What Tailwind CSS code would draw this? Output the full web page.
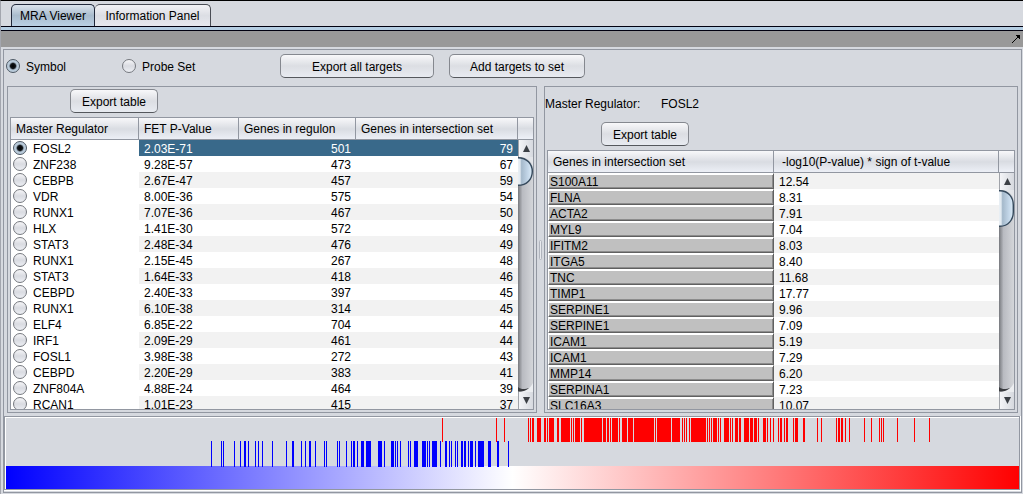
<!DOCTYPE html>
<html lang="en">
<head>
<meta charset="utf-8">
<title>MRA Viewer</title>
<script src="https://cdn.jsdelivr.net/npm/@tailwindcss/browser@4"></script>
</head>
<body class="flex h-screen flex-col overflow-hidden border-t border-l border-t-black border-l-[#a3a6ae] bg-[#d6d9df] font-['Liberation_Sans',Arial,sans-serif] text-[12px] leading-4 text-black">

<nav class="flex h-[26px] shrink-0 items-end border-b border-[#00000f] pl-[10px]" role="tablist">
  <button role="tab" aria-selected="true" class="h-[22px] w-[84px] rounded-t-[5px] border border-b-0 border-[#20283a] bg-linear-to-b from-[#dbe3ec] via-[#a9bccd] to-[#bacfe3]">MRA Viewer</button>
  <button role="tab" aria-selected="false" class="h-[22px] w-[116px] rounded-t-[5px] border border-b-0 border-l-0 border-[#4a4d55] bg-linear-to-b from-[#f3f3f6] via-[#dcdee4] to-[#e6e8ee]">Information Panel</button>
</nav>
<div class="h-1 shrink-0 border-b border-[#00000f] bg-[#b4cde2]"></div>
<div class="flex h-4 shrink-0 items-center justify-end bg-[#999999] pr-[3px]">
  <button aria-label="Detach panel" class="block">
    <svg class="block" width="8" height="8" viewBox="0 0 8 8" shape-rendering="crispEdges"><path d="M4 0h4v4h-1v-1h-1v-1h-1v-1h-1zM5 2h1v1h-1zM4 3h1v1h-1zM3 4h1v1h-1zM2 5h1v1h-1zM1 6h1v1h-1zM0 7h1v1h-1z"/></svg>
  </button>
</div>

<main class="mt-[2px] mr-px mb-px ml-[2px] flex min-h-0 flex-1 flex-col border border-[#9297a1]">
  <div class="flex h-9 shrink-0 items-start pt-1 pl-[2px]">
    <label class="flex h-6 w-[116px] items-center gap-[6px]"><input type="radio" name="mode" checked class="size-[14px] appearance-none rounded-full border border-[#4c5763] bg-[radial-gradient(circle,#000_0,#101418_2.5px,#b4c6d6_4px,#c4d4e2_7px)]"><span class="pt-[2px]">Symbol</span></label>
    <label class="flex h-6 w-[158px] items-center gap-[6px]"><input type="radio" name="mode" class="size-[14px] appearance-none rounded-full border border-[#75787e] bg-linear-to-b from-[#f6f6f8] via-[#d9dbe1] to-[#eceef3]"><span class="pt-[2px]">Probe Set</span></label>
    <button class="h-6 w-[154px] rounded-[5px] border border-[#85888f] border-b-[#55585d] bg-linear-to-b from-[#f8f8fa] via-[#dcdee3] to-[#e8ebf1] pt-[2px]">Export all targets</button>
    <button class="ml-[15px] h-6 w-[136px] rounded-[5px] border border-[#85888f] border-b-[#55585d] bg-linear-to-b from-[#f8f8fa] via-[#dcdee3] to-[#e8ebf1] pt-[2px]">Add targets to set</button>
  </div>

  <div class="grid min-h-0 flex-1 grid-cols-[minmax(0,530fr)_7px_minmax(0,474fr)] grid-rows-[minmax(0,1fr)] px-[3px]">
    <section class="flex min-h-0 flex-col border border-[#9297a1] p-[2px]">
      <button class="mb-1 ml-[60px] h-6 w-[88px] shrink-0 rounded-[5px] border border-[#85888f] border-b-[#55585d] bg-linear-to-b from-[#f8f8fa] via-[#dcdee3] to-[#e8ebf1] pt-[2px]">Export table</button>
      <div class="flex min-h-0 flex-1 border border-[#9297a1] bg-white">
        <div class="min-w-0 flex-1 overflow-hidden">
          <table class="w-full table-fixed border-separate border-spacing-0">
            <colgroup><col class="w-[128px]"><col class="w-[100px]"><col class="w-[117px]"><col></colgroup>
            <thead><tr class="h-[22px] bg-linear-to-b from-[#f8f8fa] via-[#d9dce2] to-[#eef1f8] text-left">
              <th class="border-r border-b border-[#9297a1] px-[5px] py-0 font-normal whitespace-nowrap">Master Regulator</th>
              <th class="border-r border-b border-[#9297a1] px-[5px] py-0 font-normal whitespace-nowrap">FET P-Value</th>
              <th class="border-r border-b border-[#9297a1] px-[5px] py-0 font-normal whitespace-nowrap">Genes in regulon</th>
              <th class="border-r border-b border-[#9297a1] px-[5px] py-0 font-normal whitespace-nowrap">Genes in intersection set</th>
            </tr></thead>
            <tbody id="regulators"></tbody>
          </table>
        </div>
        <div class="flex w-[15px] shrink-0 flex-col">
          <div class="h-[22px] shrink-0 border-b border-[#9297a1] bg-linear-to-b from-[#f8f8fa] via-[#d9dce2] to-[#eef1f8]"></div>
          <div class="flex min-h-0 flex-1 flex-col bg-linear-to-r from-[#77797e] via-[#b9bbc1] via-30% to-[#d4d6da]">
            <button aria-label="Scroll up" class="flex h-[17px] shrink-0 items-center justify-center border-l border-[#a0a3a9] bg-linear-to-r from-[#f4f5f8] to-[#d6d9df]"><svg width="7" height="7" viewBox="0 0 7 7"><path d="M3.5 0L7 7H0z" fill="#3b3f45"/></svg></button>
            <svg class="block shrink-0" width="15" height="29" viewBox="0 0 15 29"><defs><linearGradient id="thumb"><stop offset="0" stop-color="#eef3f7"/><stop offset=".2" stop-color="#e2eaf1"/><stop offset=".3" stop-color="#a5b9cb"/><stop offset=".7" stop-color="#c3d6e8"/><stop offset="1" stop-color="#dcecf8"/></linearGradient></defs><path d="M0 0H2Q13 1 15 10V0z" fill="#e3e5e9"/><path d="M-1 .7H0C9 .7 14.3 7 14.3 14.5S9 28.3 0 28.3H-1z" fill="url(#thumb)" stroke="#35495c" stroke-width="1.4"/></svg>
            <div class="flex-1"></div>
            <svg class="block shrink-0" width="15" height="9" viewBox="0 0 15 9"><path d="M0 8.5C8 8.5 12 6 15 0V9H0z" fill="#eceef1"/><path d="M0 4C3 7 8 6 11 5C8 8 4 8.5 0 8.5z" fill="#3a3c40"/></svg>
            <button aria-label="Scroll down" class="flex h-[17px] shrink-0 items-center justify-center border-l border-[#a0a3a9] bg-linear-to-r from-[#f4f5f8] to-[#d6d9df]"><svg width="7" height="7" viewBox="0 0 7 7"><path d="M0 0H7L3.5 7z" fill="#3b3f45"/></svg></button>
          </div>
        </div>
      </div>
    </section>

    <div class="flex items-center justify-center"><span class="h-5 w-[3px] rounded-full border border-[#b0b4bd] bg-[#e8eaee]"></span></div>

    <section class="flex min-h-0 flex-col border border-[#9297a1]">
      <div class="flex h-[35px] shrink-0 items-start pt-[9px]"><span class="w-[116px]">Master Regulator:</span><span>FOSL2</span></div>
      <button class="mb-1 ml-[56px] h-6 w-[88px] shrink-0 rounded-[5px] border border-[#85888f] border-b-[#55585d] bg-linear-to-b from-[#f8f8fa] via-[#dcdee3] to-[#e8ebf1] pt-[2px]">Export table</button>
      <div class="mx-[2px] mb-[2px] flex min-h-0 flex-1 border border-[#9297a1] bg-white">
        <div class="min-w-0 flex-1 overflow-hidden">
          <table class="w-full table-fixed border-separate border-spacing-0">
            <colgroup><col class="w-[226px]"><col></colgroup>
            <thead><tr class="h-[22px] bg-linear-to-b from-[#f8f8fa] via-[#d9dce2] to-[#eef1f8] text-left">
              <th class="border-r border-b border-[#9297a1] px-[5px] py-0 font-normal whitespace-nowrap">Genes in intersection set</th>
              <th class="border-r border-b border-[#9297a1] px-2 py-0 font-normal whitespace-nowrap">-log10(P-value) * sign of t-value</th>
            </tr></thead>
            <tbody id="genes"></tbody>
          </table>
        </div>
        <div class="flex w-[15px] shrink-0 flex-col">
          <div class="h-[22px] shrink-0 border-b border-[#9297a1] bg-linear-to-b from-[#f8f8fa] via-[#d9dce2] to-[#eef1f8]"></div>
          <div class="flex min-h-0 flex-1 flex-col bg-linear-to-r from-[#77797e] via-[#b9bbc1] via-30% to-[#d4d6da]">
            <button aria-label="Scroll up" class="flex h-[17px] shrink-0 items-center justify-center border-l border-[#a0a3a9] bg-linear-to-r from-[#f4f5f8] to-[#d6d9df]"><svg width="7" height="7" viewBox="0 0 7 7"><path d="M3.5 0L7 7H0z" fill="#3b3f45"/></svg></button>
            <svg class="block shrink-0" width="15" height="37" viewBox="0 0 15 37"><path d="M0 0H2Q13 1 15 10V0z" fill="#e3e5e9"/><path d="M-1 .7H1C9 .7 14.3 7 14.3 15V22C14.3 30 9 36.3 1 36.3H-1z" fill="url(#thumb)" stroke="#35495c" stroke-width="1.4"/></svg>
            <div class="flex-1"></div>
            <svg class="block shrink-0" width="15" height="9" viewBox="0 0 15 9"><path d="M0 8.5C8 8.5 12 6 15 0V9H0z" fill="#eceef1"/><path d="M0 4C3 7 8 6 11 5C8 8 4 8.5 0 8.5z" fill="#3a3c40"/></svg>
            <button aria-label="Scroll down" class="flex h-[17px] shrink-0 items-center justify-center border-l border-[#a0a3a9] bg-linear-to-r from-[#f4f5f8] to-[#d6d9df]"><svg width="7" height="7" viewBox="0 0 7 7"><path d="M0 0H7L3.5 7z" fill="#3b3f45"/></svg></button>
          </div>
        </div>
      </div>
    </section>
  </div>

  <div class="mt-[3px] mb-px shrink-0 border-r border-b border-white">
    <div class="border border-[#9297a1]">
      <div class="border-t border-l border-white">
        <svg class="block h-[71px] w-full" viewBox="0 0 1013 71" preserveAspectRatio="none" shape-rendering="crispEdges" role="img" aria-label="Target gene rank barcode">
          <defs><linearGradient id="scale"><stop offset="0" stop-color="#00f"/><stop offset=".5" stop-color="#fff"/><stop offset="1" stop-color="#f00"/></linearGradient></defs>
          <rect y="48" width="1013" height="23" fill="url(#scale)"/>
          <g id="up" fill="#ff0000"></g>
          <g id="down" fill="#0000ff"></g>
        </svg>
      </div>
    </div>
  </div>
</main>

<script>
const regulators = `FOSL2 2.03E-71 501 79
ZNF238 9.28E-57 473 67
CEBPB 2.67E-47 457 59
VDR 8.00E-36 575 54
RUNX1 7.07E-36 467 50
HLX 1.41E-30 572 49
STAT3 2.48E-34 476 49
RUNX1 2.15E-45 267 48
STAT3 1.64E-33 418 46
CEBPD 2.40E-33 397 45
RUNX1 6.10E-38 314 45
ELF4 6.85E-22 704 44
IRF1 2.09E-29 461 44
FOSL1 3.98E-38 272 43
CEBPD 2.20E-29 383 41
ZNF804A 4.88E-24 464 39
RCAN1 1.01E-23 415 37`.split('\n').map(l => l.split(' '));

document.getElementById('regulators').innerHTML = regulators.map(([g, p, n, k], i) => {
  const tone = i === 0 ? 'bg-[#39698a] text-white' : i % 2 ? 'bg-white' : 'bg-[#f2f2f2]';
  const dot = i === 0
    ? 'border-[#4c5763] bg-[radial-gradient(circle,#000_0,#101418_2.5px,#b4c6d6_4px,#c4d4e2_7px)]'
    : 'border-[#75787e] bg-linear-to-b from-[#f6f6f8] via-[#d9dbe1] to-[#eceef3]';
  return `<tr class="h-4 leading-[14px]">
    <td class="p-0 pl-[2px]"><label class="flex h-4 items-center gap-[6px]"><input type="radio" name="regulator" ${i ? '' : 'checked'} class="size-[14px] appearance-none rounded-full border ${dot}"><span class="pt-[2px]">${g}</span></label></td>
    <td class="px-[5px] pt-[2px] pb-0 ${tone}">${p}</td>
    <td class="px-[5px] pt-[2px] pb-0 text-right ${tone}">${n}</td>
    <td class="px-[5px] pt-[2px] pb-0 text-right ${tone}">${k}</td></tr>`;
}).join('');

const genes = `S100A11 12.54
FLNA 8.31
ACTA2 7.91
MYL9 7.04
IFITM2 8.03
ITGA5 8.40
TNC 11.68
TIMP1 17.77
SERPINE1 9.96
SERPINE1 7.09
ICAM1 5.19
ICAM1 7.29
MMP14 6.20
SERPINA1 7.23
SLC16A3 10.07`.split('\n').map(l => l.split(' '));

document.getElementById('genes').innerHTML = genes.map(([g, v], i) => `<tr class="h-4 leading-[14px]">
    <td class="p-0"><button class="block h-4 w-full border border-t-white border-r-[#606060] border-b-[#606060] border-l-white bg-[#c0c0c0] pt-[2px] pl-px text-left leading-[12px] shadow-[inset_0_1px_0_#fff,inset_-1px_-1px_0_#8c8c8c]">${g}</button></td>
    <td class="px-[5px] pt-[2px] pb-0 ${i % 2 ? 'bg-white' : 'bg-[#f2f2f2]'}">${v}</td></tr>`).join('');

// Each mark is "position" or "position:width"; positions start at 6.
const up = '442 496 504 528 530 532:2 537:4 544:2 547 549:5 557:2 561:9 571 573 575:5 581 584:18 603:3 607:2 610 612:6 619 622:5 628:5 634:20 655 657:14 672:8 682 684 686 689 691:15 707 709 711 713:4 718 720 724:5 730 732 735:3 739:2 744:5 750:3 754:3 758 763:3 767 770 773 778 780:2 784 786:2 793 795:3 803:2 817 821 836 838:2 841:2 845 849 864 871 879 881 883 897 914 929';
const down = '211 221 223 234 240 244:2 248 255 258 262 272 286 292:2 301 305 309:2 315 324 326 337 339 346 351 353:2 357 361:3 366:5 378:4 384 391:3 395 397 400 408 410 414:4 422:4 427 429 432:5 440 445:2 449 451 455 457 461:2 464:2 468 470:3 475 478:6 488:3 497:2 508';
const bars = (s, y, h) => s.split(' ').map(m => {
  const [x, w = 1] = m.split(':').map(Number);
  return `<rect x="${x - 6}" y="${y}" width="${w}" height="${h}"/>`;
}).join('');
document.getElementById('up').innerHTML = bars(up, 0, 24);
document.getElementById('down').innerHTML = bars(down, 23, 26);
</script>
</body>
</html>
